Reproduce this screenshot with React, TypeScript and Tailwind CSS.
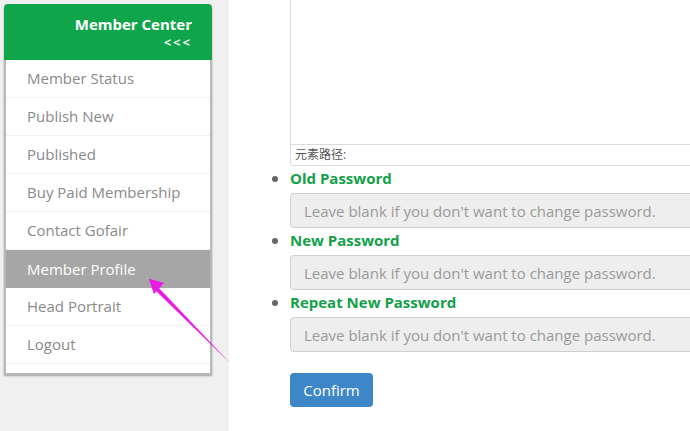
const menu = [
  "Member Status",
  "Publish New",
  "Published",
  "Buy Paid Membership",
  "Contact Gofair",
  "Member Profile",
  "Head Portrait",
  "Logout",
];

const fields = ["Old Password", "New Password", "Repeat New Password"];

const font = { fontFamily: '"Open Sans", "Noto Sans CJK SC", sans-serif' };

export default function App() {
  return (
    <div className="relative flex h-[431px] w-[690px] overflow-hidden bg-white" style={font}>
      {/* sidebar column */}
      <div className="w-[229px] shrink-0 bg-[#f0f0f0] p-1">
        <div className="w-[208px] overflow-hidden rounded-t-[4px] bg-white shadow-[0_1px_2px_rgba(0,0,0,0.35)]">
          <div className="flex h-[56px] flex-col items-end justify-center bg-[#0fa54a] pr-[20px] text-white">
            <div className="text-[15px] leading-[20px] font-bold">Member Center</div>
            <div className="text-[13px] leading-[16px] font-bold tracking-[2px]">&lt;&lt;&lt;</div>
          </div>
          <ul className="border-x-2 border-b-2 border-[#b8b8b8] pb-[9px]">
            {menu.map((m) => (
              <li
                key={m}
                className={
                  m === "Member Profile"
                    ? "flex h-[38px] items-center bg-[#a6a6a6] pl-[21px] text-[15px] text-white"
                    : "flex h-[38px] items-center border-b border-[#f2f2f2] pl-[21px] text-[15px] text-[#8a8a8a]"
                }
              >
                {m}
              </li>
            ))}
          </ul>
        </div>
      </div>

      {/* form column */}
      <div className="min-w-0 flex-1 overflow-hidden pl-[61px]">
        <div className="w-[480px] rounded-b-[3px] border-x border-b border-[#dcdcdc]">
          <div className="h-[144px]" />
          <div className="flex h-[21px] items-center border-t border-[#dcdcdc] pl-[4px] text-[12px] leading-[16px] text-[#555]">
            元素路径:
          </div>
        </div>
        <ul className="list-disc text-[#555]">
          {fields.map((f) => (
            <li key={f} className="marker:text-[#666]">
              <div className="text-[15px] leading-[22px] font-bold text-[#13a04a]">{f}</div>
              <input
                type="password"
                disabled
                placeholder="Leave blank if you don't want to change password."
                className="mt-1 block h-[35px] w-[480px] rounded-[4px] border border-[#cfcfcf] bg-[#eeeeee] px-[13px] text-[15px] placeholder:text-[#9a9a9a]"
              />
            </li>
          ))}
        </ul>
        <button className="mt-[21px] h-[34px] w-[83px] rounded-[4px] bg-[#3d87c9] text-[15px] text-white">
          Confirm
        </button>
      </div>

      {/* annotation arrow */}
      <svg className="pointer-events-none absolute top-0 left-0" width="690" height="431">
        <polygon points="149,279 163,283 158,287 230,363 155,290 154,293" fill="#e81ce6" />
        <polygon points="149,279 164,283 154,294" fill="#e81ce6" />
      </svg>
    </div>
  );
}
